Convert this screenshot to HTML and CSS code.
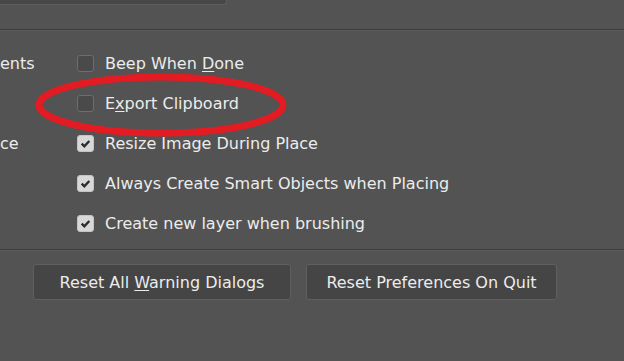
FILE: index.html
```html
<!DOCTYPE html>
<html lang="en">
<head>
    <meta charset="UTF-8">
    <meta name="viewport" content="width=device-width, initial-scale=1.0">
    <title>Preferences - General</title>
    <link rel="stylesheet" href="styles.css">
</head>
<body>
    <div class="panel">
        <div class="top-field"></div>
        <div class="rule"></div>

        <div class="options">
            <div class="opt-row">
                <div class="side-label">ents</div>
                <span class="check"></span>
                <span class="opt-text">Beep When <u>D</u>one</span>
            </div>
            <div class="opt-row">
                <div class="side-label"></div>
                <span class="check"></span>
                <span class="opt-text">E<u>x</u>port Clipboard</span>
            </div>
            <div class="opt-row">
                <div class="side-label side-label--short">ce</div>
                <span class="check is-on"><svg viewBox="0 0 17 17"><path d="M4.2 8.6 L7.2 11.6 L12.8 5.6"/></svg></span>
                <span class="opt-text">Resize Image During Place</span>
            </div>
            <div class="opt-row">
                <div class="side-label"></div>
                <span class="check is-on"><svg viewBox="0 0 17 17"><path d="M4.2 8.6 L7.2 11.6 L12.8 5.6"/></svg></span>
                <span class="opt-text">Always Create Smart Objects when Placing</span>
            </div>
            <div class="opt-row">
                <div class="side-label"></div>
                <span class="check is-on"><svg viewBox="0 0 17 17"><path d="M4.2 8.6 L7.2 11.6 L12.8 5.6"/></svg></span>
                <span class="opt-text">Create new layer when brushing</span>
            </div>
        </div>

        <div class="rule rule--bottom"></div>

        <div class="buttons">
            <button class="btn btn--warn">Reset All <u>W</u>arning Dialogs</button>
            <button class="btn btn--quit">Reset Preferences On Quit</button>
        </div>

        <!-- red annotation ring -->
        <svg class="ring" viewBox="0 0 266 72">
            <ellipse cx="131" cy="35" rx="122" ry="28"/>
        </svg>
    </div>
</body>
</html>
```

FILE: styles.css
```css
:root {
    --bg-color: #535353;
    --text-color: #ececec;
    --line-dark: #3d3d3d;
    --line-light: #5b5b5b;
    --ring-color: #e31b23;
}

body {
    margin: 0;
    background-color: var(--bg-color);
    color: var(--text-color);
    font-family: 'DejaVu Sans', 'Liberation Sans', sans-serif;
    font-size: 16px;
}

.panel {
    position: relative;
    height: 361px;
    overflow: hidden;
}

.top-field {
    width: 226px;
    height: 4px;
    background: #484848;
    border-right: 1px solid #5e5e5e;
    border-bottom: 1px solid #5e5e5e;
    border-bottom-right-radius: 3px;
}

.rule {
    margin-top: 24px;
    height: 1px;
    background: var(--line-dark);
    border-bottom: 1px solid var(--line-light);
}

.options {
    padding-top: 12px;
}

.opt-row {
    display: flex;
    align-items: center;
    height: 40px;
}

.side-label {
    width: 33px;
    flex: none;
    text-align: right;
    white-space: nowrap;
}

.side-label--short {
    width: 13px;
    margin-right: 20px;
}

.check {
    flex: none;
    box-sizing: border-box;
    width: 17px;
    height: 17px;
    margin-left: 44px;
    margin-right: 11px;
    border: 1px solid #6d6d6d;
    border-radius: 3px;
    background: #4a4a4a;
}

.check.is-on {
    background: #d8d8d8;
    border-color: #c4c4c4;
}

.check svg {
    display: block;
    width: 15px;
    height: 15px;
}

.check path {
    fill: none;
    stroke: #2b2b2b;
    stroke-width: 2.7;
}

.opt-text {
    white-space: nowrap;
}

.opt-text u,
.btn u {
    text-underline-offset: 2px;
}

.rule--bottom {
    margin-top: 6px;
}

.buttons {
    display: flex;
    gap: 15px;
    padding-left: 33px;
    margin-top: 13px;
}

.btn {
    height: 36px;
    box-sizing: border-box;
    background: #454545;
    border: 1px solid #5f5f5f;
    border-radius: 3px;
    color: var(--text-color);
    font-family: inherit;
    font-size: 16px;
    padding: 0;
}

.btn--warn {
    width: 258px;
}

.btn--quit {
    width: 251px;
}

.ring {
    position: absolute;
    left: 30px;
    top: 70px;
    width: 266px;
    height: 72px;
}

.ring ellipse {
    fill: none;
    stroke: var(--ring-color);
    stroke-width: 7;
}
```
